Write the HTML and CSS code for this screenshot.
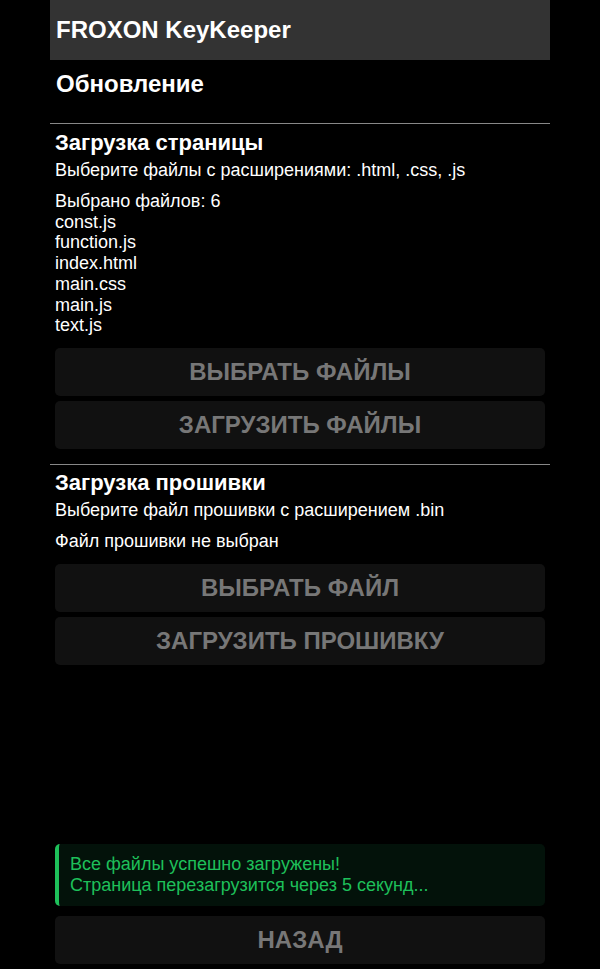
FILE: index.html
```html
<!DOCTYPE html>
<html lang="ru">
<head>
    <meta charset="UTF-8">
    <meta name="viewport" content="width=device-width, initial-scale=1.0">
    <title>FROXON KeyKeeper</title>
    <link rel="stylesheet" href="styles.css">
</head>
<body>

<div class="app">
    <div class="header">FROXON KeyKeeper</div>

    <h2 class="page-title">Обновление</h2>

    <!-- Web page upload -->
    <div class="section">
        <h3>Загрузка страницы</h3>
        <p class="hint">Выберите файлы с расширениями: .html, .css, .js</p>
        <div class="file-list">
            <div>Выбрано файлов: 6</div>
            <div>const.js</div>
            <div>function.js</div>
            <div>index.html</div>
            <div>main.css</div>
            <div>main.js</div>
            <div>text.js</div>
        </div>
        <button class="btn">Выбрать файлы</button>
        <button class="btn">Загрузить файлы</button>
    </div>

    <!-- Firmware upload -->
    <div class="section">
        <h3>Загрузка прошивки</h3>
        <p class="hint">Выберите файл прошивки с расширением .bin</p>
        <div class="file-list">
            <div>Файл прошивки не выбран</div>
        </div>
        <button class="btn">Выбрать файл</button>
        <button class="btn">Загрузить прошивку</button>
    </div>

    <div class="footer">
        <div class="status-ok">
            Все файлы успешно загружены!<br>
            Страница перезагрузится через 5 секунд...
        </div>
        <button class="btn">Назад</button>
    </div>
</div>

</body>
</html>
```

FILE: styles.css
```css
html, body {
    margin: 0;
    padding: 0;
    background: #000;
}

body {
    font-family: "Liberation Sans", Arial, sans-serif;
    color: #fff;
    font-size: 18px;
}

.app {
    width: 500px;
    margin: 0 auto;
    min-height: 100vh;
    display: flex;
    flex-direction: column;
}

.header {
    background-color: #333;
    height: 60px;
    line-height: 60px;
    padding: 0 6px;
    font-size: 24px;
    font-weight: bold;
}

.page-title {
    font-size: 24px;
    line-height: 28px;
    margin: 0;
    padding: 10px 6px 25px;
    border-bottom: 1px solid #888;
}

.section {
    padding: 6px 5px 15px;
}

.section + .section {
    border-top: 1px solid #888;
    padding-top: 5px;
}

.section h3 {
    font-size: 22px;
    line-height: 25px;
    margin: 0;
}

.hint {
    margin: 5px 0 0;
    line-height: 21px;
}

.file-list {
    margin: 10px 0 12px;
    line-height: 20.7px;
}

.section .btn + .btn {
    margin-top: 5px;
}

.btn {
    display: block;
    width: 100%;
    height: 48px;
    background-color: #111;
    color: #777;
    border: none;
    border-radius: 5px;
    font-family: inherit;
    font-size: 24px;
    font-weight: bold;
    text-transform: uppercase;
    cursor: pointer;
}

.footer {
    margin-top: auto;
    padding: 0 5px 5px;
}

.status-ok {
    background-color: #03120a;
    border-left: 4px solid #1ec05a;
    border-radius: 5px;
    color: #1ec05a;
    padding: 10px 11px;
    line-height: 21px;
    margin-bottom: 10px;
}
```
